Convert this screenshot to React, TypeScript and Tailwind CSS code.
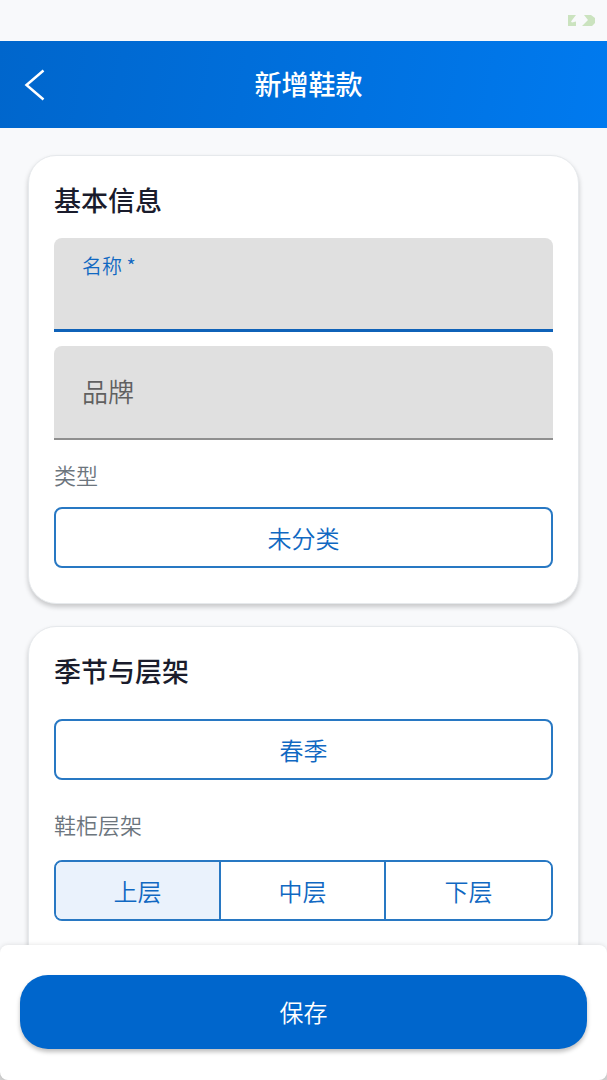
import { useState } from "react";
import clsx from "clsx";

function StatusBar() {
  return (
    <div className="flex h-[41px] shrink-0 items-center justify-end pr-3">
      <svg width="27" height="11" viewBox="0 0 27 11" fill="#cbe3bf" aria-hidden="true">
        <path d="M0 0h8L3 6.500l1 1 4-1V11H0z" />
        <path d="M16 0h7l4 3v5l-3 3H14l6-6z" />
      </svg>
    </div>
  );
}

function Header() {
  return (
    <header className="flex h-[87px] shrink-0 items-center bg-linear-100 from-[#0066cc] to-[#007aef] text-white">
      <button type="button" aria-label="返回" className="flex h-full w-[70px] items-center pl-6">
        <svg width="21" height="32" viewBox="0 0 21 32" fill="none" stroke="currentColor" strokeWidth="2.500">
          <path d="M19.500 1.500 2.500 16l17 14.500" />
        </svg>
      </button>
      <h1 className="flex-1 text-center text-[27px] font-medium">新增鞋款</h1>
      <div className="w-15" />
    </header>
  );
}

type FieldProps = {
  id: string;
  label: string;
  active: boolean;
  onFocus: () => void;
};

function Field({ id, label, active, onFocus }: FieldProps) {
  const [value, setValue] = useState("");
  const raised = active || value !== "";
  return (
    <div
      className={clsx(
        "relative h-[94px] rounded-t-lg bg-[#e0e0e0]",
        active ? "border-b-3 border-[#0f62b8]" : "border-b-2 border-[#8f8f8f]",
      )}
    >
      <label
        htmlFor={id}
        className={clsx(
          "pointer-events-none absolute left-7",
          raised ? "top-3 text-[20px] leading-8" : "top-0 text-[26px] leading-[90px]",
          active ? "text-[#1068c2]" : "text-[#606060]",
        )}
      >
        {label}
      </label>
      <input
        id={id}
        value={value}
        onChange={(e) => setValue(e.target.value)}
        onFocus={onFocus}
        className="h-full w-full bg-transparent px-7 pt-9 text-[26px] text-[#1a1a2e] outline-none"
      />
    </div>
  );
}

function Card({ children }: { children: React.ReactNode }) {
  return (
    <section className="rounded-[28px] border border-[#e6e9ec] bg-white px-[25px] pt-6 pb-[35px] shadow-[0_3px_5px_rgba(0,0,0,0.2)]">
      {children}
    </section>
  );
}

const titleStyle = "text-[27px] leading-10 font-medium text-[#1a1c2c]";
const labelStyle = "text-[22px] leading-8 text-[#6c757d]";
const outlined = "h-[61px] w-full rounded-lg border-2 border-[#2878c3] text-[24px] text-[#1068c2]";
const shelves = ["上层", "中层", "下层"];

export default function App() {
  const [focused, setFocused] = useState("name");
  const [shelf, setShelf] = useState("上层");

  return (
    <div className="flex h-screen flex-col bg-[#f8f9fb] font-['Noto_Sans_CJK_SC',sans-serif] font-[350]">
      <StatusBar />
      <Header />
      <main className="flex min-h-0 flex-1 flex-col gap-[22px] overflow-y-auto px-7 pt-[27px] [scrollbar-width:none]">
        <Card>
          <h2 className={titleStyle}>基本信息</h2>
          <div className="mt-[18px] flex flex-col gap-[14px]">
            <Field id="name" label="名称 *" active={focused === "name"} onFocus={() => setFocused("name")} />
            <Field id="brand" label="品牌" active={focused === "brand"} onFocus={() => setFocused("brand")} />
          </div>
          <p id="type-label" className={clsx(labelStyle, "mt-[18px]")}>类型</p>
          <button type="button" aria-describedby="type-label" className={clsx(outlined, "mt-[17px]")}>
            未分类
          </button>
        </Card>
        <div className="pb-7">
          <Card>
            <h2 className={titleStyle}>季节与层架</h2>
            <button type="button" className={clsx(outlined, "mt-7")}>
              春季
            </button>
            <p id="shelf-label" className={clsx(labelStyle, "mt-7")}>鞋柜层架</p>
            <div
              role="group"
              aria-labelledby="shelf-label"
              className={clsx(outlined, "my-5 grid grid-cols-3 divide-x-2 divide-[#2878c3] overflow-hidden")}
            >
              {shelves.map((name) => (
                <button
                  key={name}
                  type="button"
                  aria-pressed={shelf === name}
                  onClick={() => setShelf(name)}
                  className={shelf === name ? "bg-[#eaf2fc]" : "bg-white"}
                >
                  {name}
                </button>
              ))}
            </div>
          </Card>
        </div>
      </main>
      <div className="relative shrink-0 bg-linear-to-b from-transparent from-50% to-[#d4d4d4] to-50%">
        <footer className="rounded-lg bg-white px-5 pt-[30px] pb-[31px] shadow-[0_0_5px_rgba(0,0,0,0.12)]">
          <button
            type="submit"
            className="h-[74px] w-full rounded-[28px] bg-[#0066cc] text-[24px] text-white shadow-[0_3px_4px_rgba(0,0,0,0.25)]"
          >
            保存
          </button>
        </footer>
      </div>
    </div>
  );
}
